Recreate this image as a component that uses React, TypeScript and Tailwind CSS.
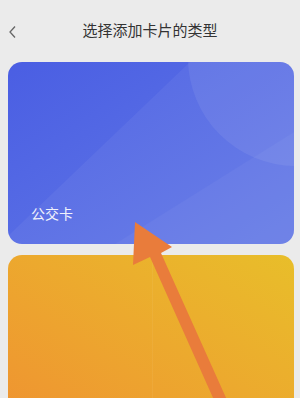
import React from 'react';

const font = '"Noto Sans CJK SC", "Noto Sans", sans-serif';

const BusCard: React.FC = () => (
  <div className="relative mx-[8px] h-[182px] w-[286px] overflow-hidden rounded-[14px] bg-gradient-to-br from-[#4a5ee3] to-[#6378e6]">
    <svg className="absolute inset-0" width="286" height="182" viewBox="0 0 286 182">
      <polygon points="0,174 182,0 286,0 286,182 0,182" fill="#ffffff" opacity="0.05" />
      <polygon points="107,182 286,70 286,182" fill="#ffffff" opacity="0.04" />
      <circle cx="288" cy="-4" r="108" fill="#ffffff" opacity="0.07" />
    </svg>
    <span className="absolute left-[23px] top-[141px] text-[14px] text-[#f1f2fb]" style={{ fontFamily: font }}>
      公交卡
    </span>
  </div>
);

const OtherCard: React.FC = () => (
  <div className="relative mx-[8px] mt-[11px] h-[182px] w-[286px] overflow-hidden rounded-[14px] bg-gradient-to-tr from-[#ef9131] to-[#e8be2a]">
    <div className="absolute left-[144px] top-0 h-full w-px bg-white/5" />
  </div>
);

export default function App() {
  return (
    <div className="relative h-[398px] w-[300px] overflow-hidden bg-[#ebebeb]" style={{ fontFamily: font }}>
      <div className="relative flex h-[62px] items-center justify-center pb-[2px]">
        <svg className="absolute left-[8px] top-[25px]" width="10" height="14" viewBox="0 0 10 14">
          <polyline points="7,1.5 2,7 7,12.5" fill="none" stroke="#666" strokeWidth="1.3" />
        </svg>
        <span className="text-[15px] text-[#333]">选择添加卡片的类型</span>
      </div>
      <BusCard />
      <OtherCard />
      <svg className="pointer-events-none absolute inset-0" width="300" height="398" viewBox="0 0 300 398">
        <polygon points="135,222 172,247 161,253 227,400 214,400 150,257 133,265" fill="#e97c3b" />
      </svg>
    </div>
  );
}
